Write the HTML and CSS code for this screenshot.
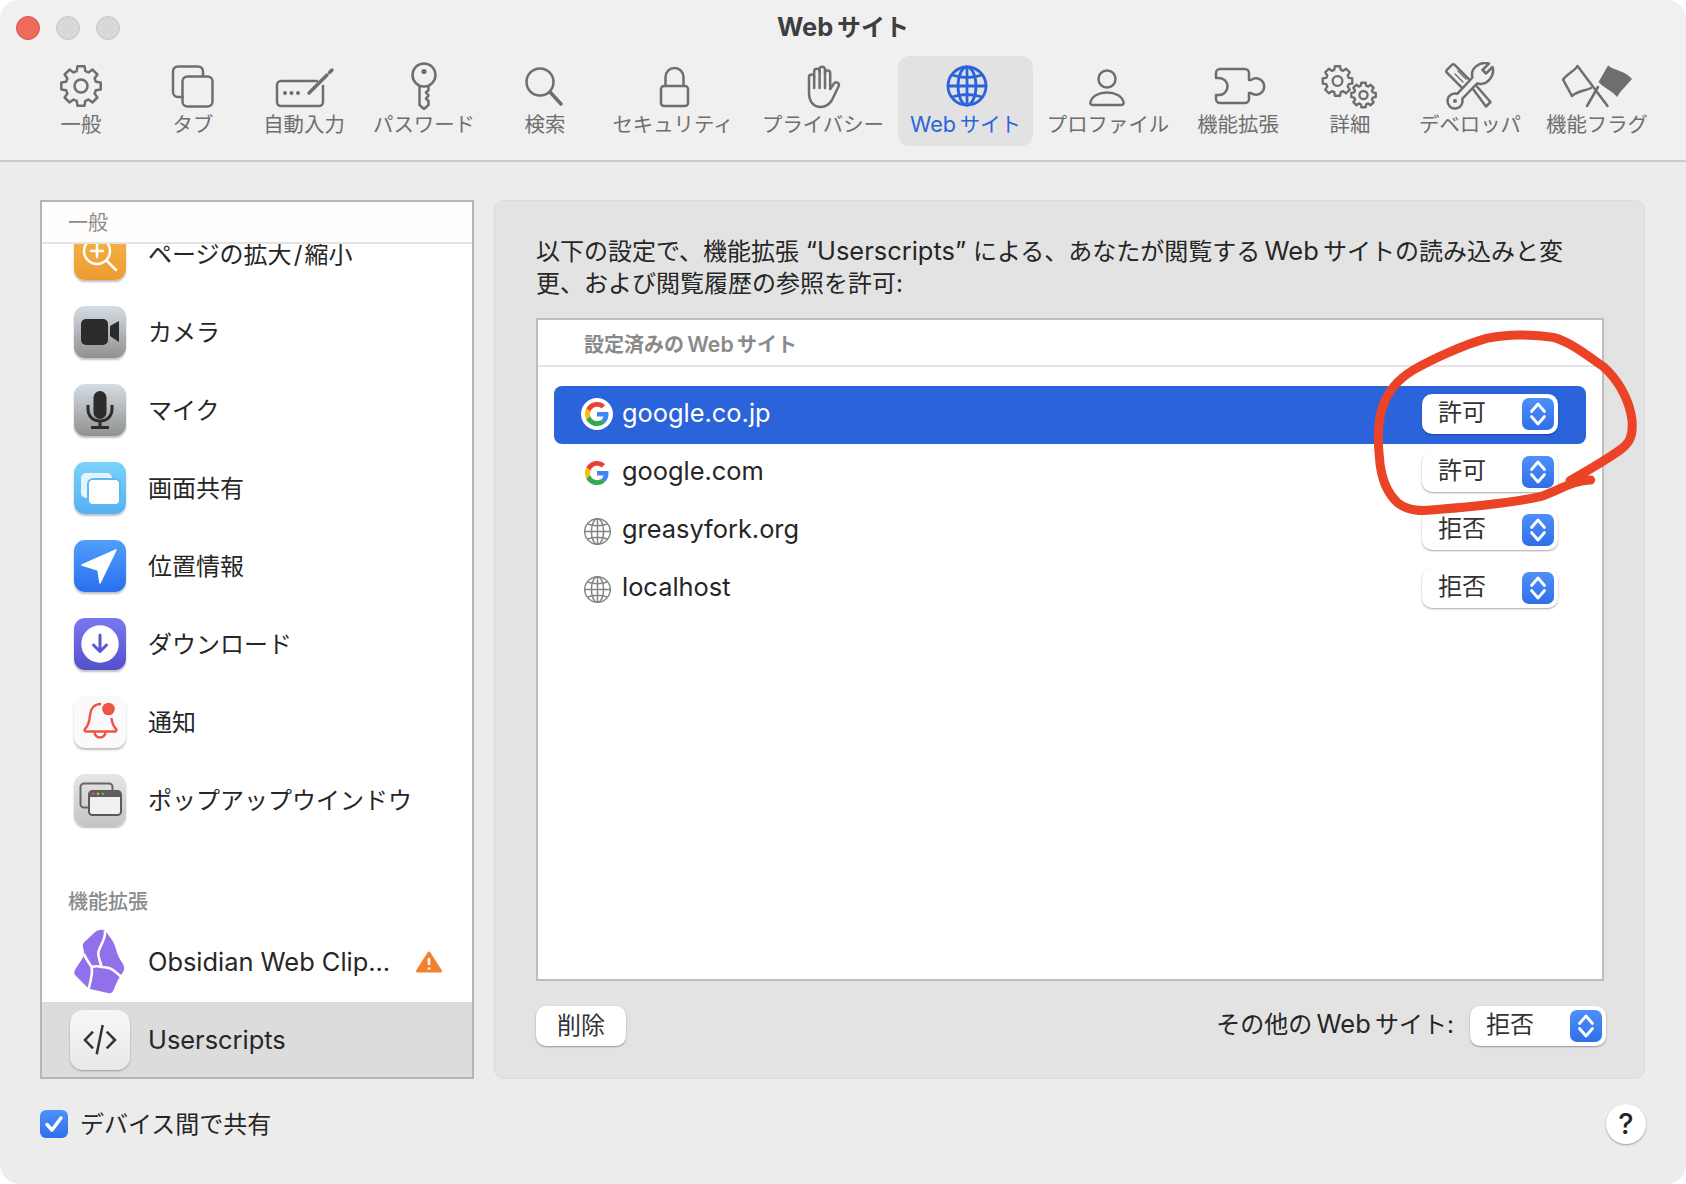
FILE: index.html
```html
<!DOCTYPE html>
<html lang="ja">
  <head>
    <meta charset="UTF-8" />
    <meta name="viewport" content="width=device-width, initial-scale=1.0" />
    <title>Webサイト</title>
    <link rel="stylesheet" href="styles.css">
  </head>

  <body>
    <svg class="defs">
      <defs>
        <g id="gear">
          <path d="M14.9 -4.3L19.7 -3.5L19.7 3.5L14.9 4.3L13.6 7.5L16.4 11.5L11.5 16.4L7.5 13.6L4.3 14.9L3.5 19.7L-3.5 19.7L-4.3 14.9L-7.5 13.6L-11.5 16.4L-16.4 11.5L-13.6 7.5L-14.9 4.3L-19.7 3.5L-19.7 -3.5L-14.9 -4.3L-13.6 -7.5L-16.4 -11.5L-11.5 -16.4L-7.5 -13.6L-4.3 -14.9L-3.5 -19.7L3.5 -19.7L4.3 -14.9L7.5 -13.6L11.5 -16.4L16.4 -11.5L13.6 -7.5Z" />
          <circle r="6.5" />
        </g>
        <g id="globe">
          <circle r="19" />
          <ellipse rx="9" ry="19" />
          <path d="M0 -19V19M-19 0H19M-15 -11Q0 -6 15 -11M-15 11Q0 6 15 11" />
        </g>
        <g id="google">
          <path fill="#EA4335" d="M24 9.5c3.54 0 6.71 1.22 9.21 3.6l6.85-6.85C35.9 2.38 30.47 0 24 0 14.62 0 6.51 5.38 2.56 13.22l7.98 6.19C12.43 13.72 17.74 9.5 24 9.5z" />
          <path fill="#4285F4" d="M46.98 24.55c0-1.57-.15-3.09-.38-4.55H24v9.02h12.94c-.58 2.96-2.26 5.48-4.78 7.18l7.73 6c4.51-4.18 7.09-10.36 7.09-17.65z" />
          <path fill="#FBBC05" d="M10.53 28.59c-.48-1.45-.76-2.99-.76-4.59s.27-3.14.76-4.59l-7.98-6.19C.92 16.46 0 20.12 0 24c0 3.88.92 7.54 2.56 10.78l7.97-6.19z" />
          <path fill="#34A853" d="M24 48c6.48 0 11.93-2.13 15.89-5.81l-7.73-6c-2.15 1.45-4.92 2.3-8.16 2.3-6.26 0-11.57-4.22-13.47-9.91l-7.98 6.19C6.51 42.62 14.62 48 24 48z" />
        </g>
        <g id="updown">
          <path d="M9.500 13.500L16 6L22.500 13.500M9.500 18.500L16 26L22.500 18.500" />
        </g>
      </defs>
    </svg>

    <div class="window">
      <div class="titlebar">
        <div class="lights">
          <span class="light red"></span>
          <span class="light"></span>
          <span class="light"></span>
        </div>
        <div class="title"><span class="lat">Web</span>&#8201;サイト</div>
      </div>

      <div class="toolbar">
        <div class="tool w-general">
          <svg class="tool-icon" viewBox="-35 0 70 48"><use href="#gear" transform="translate(0 24)" /></svg>
          <span>一般</span>
        </div>
        <div class="tool w-tabs">
          <svg class="tool-icon" viewBox="-35 0 70 48">
            <rect x="-10.5" y="14.5" width="30" height="30" rx="5" />
            <path d="M-10.5 35H-15a5 5 0 0 1-5-5V9.5a5 5 0 0 1 5-5H5a5 5 0 0 1 5 5V14" />
          </svg>
          <span>タブ</span>
        </div>
        <div class="tool w-autofill">
          <svg class="tool-icon" viewBox="-35 0 70 48">
            <path d="M13 19H-23a4 4 0 0 0-4 4V40a4 4 0 0 0 4 4H15a4 4 0 0 0 4-4V24" />
            <circle class="solid" cx="-19" cy="31" r="2" />
            <circle class="solid" cx="-12.5" cy="31" r="2" />
            <circle class="solid" cx="-6" cy="31" r="2" />
            <path class="pen" d="M5 31L23 13M25.5 10.5L28 8" />
          </svg>
          <span>自動入力</span>
        </div>
        <div class="tool w-password">
          <svg class="tool-icon" viewBox="-35 0 70 48">
            <circle cy="13" r="11.5" />
            <circle class="solid" cy="9.5" r="2.6" />
            <path d="M-4.5 24V43L0 47L4.5 43V39L2 36.5L4.5 33.5L2 30.5L4.5 28V24" />
          </svg>
          <span>パスワード</span>
        </div>
        <div class="tool w-search">
          <svg class="tool-icon" viewBox="-35 0 70 48">
            <circle cx="-5" cy="20" r="13.5" />
            <path class="pen" d="M5 30L16 42" />
          </svg>
          <span>検索</span>
        </div>
        <div class="tool w-wide">
          <svg class="tool-icon" viewBox="-35 0 70 48">
            <rect x="-12" y="24" width="27" height="20" rx="3" />
            <path d="M-7.500 24V15a9 9 0 0 1 18 0V24" />
          </svg>
          <span>セキュリティ</span>
        </div>
        <div class="tool w-wide">
          <svg class="tool-icon" viewBox="-35 0 70 48">
            <path d="M-14 30V15a2.6 2.6 0 0 1 5.2 0V9.5a2.7 2.7 0 0 1 5.4 0V7.5a2.7 2.7 0 0 1 5.4 0V11a2.6 2.6 0 0 1 5.2 0V27L11 21.5a2.7 2.7 0 0 1 4.6 2.8L9 38C6.5 42 3 45 -2 45C-9 45 -14 40 -14 31Z" />
            <path d="M-8.8 15V26M-3.4 9V26M2 9V26" />
          </svg>
          <span>プライバシー</span>
        </div>
        <div class="tool w-websites active">
          <svg class="tool-icon" viewBox="-35 0 70 48"><use href="#globe" transform="translate(1 24)" /></svg>
          <span><span class="lat">Web</span>&#8201;サイト</span>
        </div>
        <div class="tool w-wide">
          <svg class="tool-icon" viewBox="-35 0 70 48">
            <circle cx="-1" cy="17" r="8.5" />
            <path d="M-15 43C-17 43 -18 42 -17.5 40C-16 34 -9 30.5 -1 30.5C7 30.5 14 34 15.5 40C16 42 15 43 13 43Z" />
          </svg>
          <span>プロファイル</span>
        </div>
        <div class="tool w-extensions">
          <svg class="tool-icon" viewBox="-35 0 70 48">
            <path d="M-18 7H7a4 4 0 0 1 4 4V18h2A8.200 8.200 0 1 1 13 31h-2V37a4 4 0 0 1-4 4H-18a4 4 0 0 1-4-4V33h3a8.500 8.500 0 0 0 0-17h-3V11a4 4 0 0 1 4-4Z" />
          </svg>
          <span>機能拡張</span>
        </div>
        <div class="tool w-advanced">
          <svg class="tool-icon" viewBox="-35 0 70 48">
            <use href="#gear" transform="translate(-12.5 19) scale(.75)" stroke-width="3.1" />
            <use href="#gear" transform="translate(13.5 33) scale(.62)" stroke-width="3.8" />
          </svg>
          <span>詳細</span>
        </div>
        <div class="tool w-developer">
          <svg class="tool-icon" viewBox="-35 0 70 48">
            <rect x="-15" y="-5.5" width="30" height="11" rx="2" transform="translate(-10 16) rotate(45)" />
            <path d="M-15 12L-7 20M-12 9L-4 17" stroke-width="1.4" />
            <path d="M3 27L16 44.5L20.5 40L6.5 24" />
            <path d="M19 1.5L12.5 8L16 11.5L22.5 5C25 13 18 24 7 21.5L-7.8 36.8A7.5 7.5 0 1 1 -12.8 31.8L2.5 15.5C0 7 9 -1 19 1.5Z" class="knock" />
            <circle class="solid" cx="-15" cy="39" r="2" />
          </svg>
          <span>デベロッパ</span>
        </div>
        <div class="tool w-flags">
          <svg class="tool-icon" viewBox="-35 0 70 48">
            <path d="M-19.5 4.5C-24 10 -30 12 -34 17.5L-25 34C-20 29 -12 29 -6 26" />
            <path d="M-19.5 4L10.5 44M1 25L-10 44" />
            <path class="solid" d="M11 3.5C18 9 27 8 35 17C30 23 24 28 20 35C14 28 7 26 1.5 20Z" />
          </svg>
          <span>機能フラグ</span>
        </div>
      </div>

      <div class="content">
        <div class="sidebar">
          <div class="side-head">一般</div>
          <div class="side-list">
            <div class="side-row first">
              <span class="app-icon i-zoom">
                <svg viewBox="0 0 52 52" class="line-white"><circle cx="23" cy="23" r="13" /><path d="M17 23H29M23 17V29M32.5 32.5L42 42" /></svg>
              </span>
              <span class="side-text">ページの拡大&#8202;/&#8202;縮小</span>
            </div>
            <div class="side-row">
              <span class="app-icon i-gray">
                <svg viewBox="0 0 52 52"><rect x="7" y="13" width="27" height="26" rx="5" fill="#2b2b2b" /><path d="M36 20L45 15V36L36 30Z" fill="#2b2b2b" /></svg>
              </span>
              <span class="side-text">カメラ</span>
            </div>
            <div class="side-row">
              <span class="app-icon i-gray">
                <svg viewBox="0 0 52 52"><rect x="19.5" y="7" width="13" height="28" rx="6.5" fill="#2b2b2b" /><path d="M14 21V25C14 32 19 37 26 37C33 37 38 32 38 25V21M26 37V43M17 43.5H35" fill="none" stroke="#2b2b2b" stroke-width="3" /></svg>
              </span>
              <span class="side-text">マイク</span>
            </div>
            <div class="side-row">
              <span class="app-icon i-screen">
                <svg viewBox="0 0 52 52"><rect x="7" y="11" width="31" height="25" rx="5" fill="#e4f4fd" /><rect x="14" y="17" width="32" height="26" rx="5" fill="#fff" stroke="#5db8f4" stroke-width="2" /></svg>
              </span>
              <span class="side-text">画面共有</span>
            </div>
            <div class="side-row">
              <span class="app-icon i-location">
                <svg viewBox="0 0 52 52"><path d="M42 10L8 25L24 30L26 43Z" fill="#fff" stroke="#fff" stroke-width="1.5" stroke-linejoin="round" /></svg>
              </span>
              <span class="side-text">位置情報</span>
            </div>
            <div class="side-row">
              <span class="app-icon i-download">
                <svg viewBox="0 0 52 52"><circle cx="26" cy="26" r="18.7" fill="#fff" /><path d="M26 17V33M19.5 27L26 33.5L32.5 27" fill="none" stroke="#5a55d8" stroke-width="3" stroke-linecap="round" stroke-linejoin="round" /></svg>
              </span>
              <span class="side-text">ダウンロード</span>
            </div>
            <div class="side-row">
              <span class="app-icon i-notify">
                <svg viewBox="0 0 52 52"><path d="M27 8C20 8 16.5 13 16 19C15.5 26 14 30 11 33C10 34.5 11 35.5 12 35.5H41C42 35.5 43 34 42 33C39.5 30.5 38 27 37.5 22M20.5 36a5.5 5.5 0 0 0 11 0" fill="none" stroke="#ee5545" stroke-width="2.5" /><circle cx="34.5" cy="13" r="6.3" fill="#ee5545" /></svg>
              </span>
              <span class="side-text">通知</span>
            </div>
            <div class="side-row">
              <span class="app-icon i-popup">
                <svg viewBox="0 0 52 52"><rect x="6.5" y="9.5" width="32" height="24" rx="3.5" fill="none" stroke="#666" stroke-width="2" /><rect x="15" y="17" width="32" height="24" rx="3.5" fill="#f1f1f1" stroke="#5a5a5a" stroke-width="2" /><path d="M15 23V20.5a3.5 3.5 0 0 1 3.5-3.5H43.500a3.500 3.500 0 0 1 3.500 3.500V23Z" fill="#5f5f5f" /><circle cx="19" cy="19.800" r="1.300" fill="#ee5545" /><circle cx="24" cy="19.800" r="1.300" fill="#f0b03c" /><circle cx="29" cy="19.800" r="1.300" fill="#4fc25a" /></svg>
              </span>
              <span class="side-text">ポップアップウインドウ</span>
            </div>
            <div class="side-section">機能拡張</div>
            <div class="side-row ext">
              <svg class="obsidian" viewBox="0 0 52 66">
                <path d="M26 1C24 1 22 2 20 4C16 8 11 12 9 15C8 19 11 22 10 26C8 31 3 37 1 41C0 43 0 45 1 46L12 57C13 58 14 59 16 60C22 61 28 63 34 64C37 65 39 63 40 60C42 54 45 49 49 43C51 40 50 37 49 35C46 30 43 26 42 20C41 17 40 14 38 11L33 4C31 1 28 0 26 1Z" fill="#9171eb" />
                <path d="M31 2C32 12 24 18 24.300 25C24.500 30 27 34 27.500 38M10 25C12 30 15 34 17.700 38C21 37 24 37 27.500 38C32 38 36 39 39 41C43 44 46 47 50 50M17.700 38C19 46 16 54 14 62" fill="none" stroke="#fff" stroke-width="2.600" />
              </svg>
              <span class="side-text ext-name">Obsidian Web Clip...</span>
              <svg class="warn" viewBox="0 0 26 22">
                <path d="M13 2L24.500 20H1.500Z" fill="#f0822e" stroke="#f0822e" stroke-width="3" stroke-linejoin="round" />
                <path d="M13 7V14M13 16.500V18.500" stroke="#fff" stroke-width="2.500" />
              </svg>
            </div>
            <div class="side-row ext selected">
              <span class="script-icon">
                <svg viewBox="0 0 60 60"><path d="M23 21.700L15 30L23 38.300M36.700 21.700L45 30L36.700 38.300M32.700 15L26.700 44.300" fill="none" stroke="#333" stroke-width="2.500" /></svg>
              </span>
              <span class="side-text latin-row">Userscripts</span>
            </div>
          </div>
        </div>

        <div class="panel">
          <p class="desc">以下の設定で、機能拡張 <span class="lat">“Userscripts”</span> による、あなたが閲覧する&#8201;<span class="lat">Web</span>&#8201;サイトの読み込みと変<br>更、および閲覧履歴の参照を許可:</p>

          <div class="sites">
            <div class="sites-head">設定済みの&#8201;<span class="lat">Web</span>&#8201;サイト</div>
            <div class="sites-list">
              <div class="site selected">
                <span class="fav fav-round"><svg viewBox="0 0 48 48"><use href="#google" /></svg></span>
                <span class="site-name">google.co.jp</span>
                <div class="popup"><span class="popup-label">許可</span><svg class="stepper" viewBox="0 0 32 32"><use href="#updown" /></svg></div>
              </div>
              <div class="site">
                <span class="fav"><svg class="fav-g" viewBox="0 0 48 48"><use href="#google" /></svg></span>
                <span class="site-name">google.com</span>
                <div class="popup"><span class="popup-label">許可</span><svg class="stepper" viewBox="0 0 32 32"><use href="#updown" /></svg></div>
              </div>
              <div class="site">
                <span class="fav"><svg class="fav-globe" viewBox="-20 -20 40 40"><use href="#globe" /></svg></span>
                <span class="site-name">greasyfork.org</span>
                <div class="popup"><span class="popup-label">拒否</span><svg class="stepper" viewBox="0 0 32 32"><use href="#updown" /></svg></div>
              </div>
              <div class="site">
                <span class="fav"><svg class="fav-globe" viewBox="-20 -20 40 40"><use href="#globe" /></svg></span>
                <span class="site-name">localhost</span>
                <div class="popup"><span class="popup-label">拒否</span><svg class="stepper" viewBox="0 0 32 32"><use href="#updown" /></svg></div>
              </div>
            </div>
          </div>

          <div class="panel-foot">
            <button class="btn">削除</button>
            <div class="other">
              <span class="other-label">その他の&#8201;<span class="lat">Web</span>&#8201;サイト:</span>
              <div class="popup"><span class="popup-label">拒否</span><svg class="stepper" viewBox="0 0 32 32"><use href="#updown" /></svg></div>
            </div>
          </div>
        </div>
      </div>

      <div class="footer">
        <label class="share">
          <span class="check">
            <svg viewBox="0 0 28 28"><path d="M7 14.500L12 20L21 8" fill="none" stroke="#fff" stroke-width="3.500" stroke-linecap="round" stroke-linejoin="round" /></svg>
          </span>
          <span class="side-text">デバイス間で共有</span>
        </label>
        <div class="help">?</div>
      </div>

      <!-- hand drawn circle from the screenshot -->
      <svg class="scribble" viewBox="0 0 1038 930">
        <path d="M752 510C700 510 660 540 600 560C520 578 400 590 300 598C240 605 205 602 175 580C140 550 122 500 118 440C113 390 115 330 128 290C143 245 170 210 220 180C280 145 370 105 440 85C500 72 580 72 640 82C690 95 740 135 790 170C830 205 868 265 876 330C880 380 868 400 840 420C800 448 750 478 690 512" />
      </svg>
    </div>
  </body>
</html>
```

FILE: styles.css
```css
* {
  box-sizing: border-box;
}

body {
  margin: 0;
  background-color: #fff;
  font-family: Inter, "Noto Sans CJK JP", sans-serif;
  color: #262626;
  overflow: hidden;
}

.defs {
  display: none;
}

/* latin runs are a bit wider than Inter at the same size */
.lat {
  font-size: 1.06em;
  line-height: 1;
}

.window {
  position: relative;
  width: 1686px;
  height: 1184px;
  background-color: #ececec;
  border-radius: 20px;
  overflow: hidden;
}

/* title bar */

.titlebar {
  position: relative;
  height: 56px;
  background-color: #eff0ef;
  display: flex;
  align-items: center;
  justify-content: center;
}

.lights {
  position: absolute;
  left: 16px;
  top: 16px;
  display: flex;
  gap: 16px;
}

.light {
  width: 24px;
  height: 24px;
  border-radius: 50%;
  background-color: #d8d8d8;
  border: 1px solid #c8c8c8;
}

.light.red {
  background-color: #ee6a5f;
  border-color: #d9534a;
}

.title {
  font-size: 24px;
  font-weight: 700;
  color: #3e3e3e;
  margin-top: -6px;
}

/* toolbar */

.toolbar {
  height: 106px;
  padding-left: 28px;
  display: flex;
  align-items: flex-start;
  background-color: #eff0ef;
  border-bottom: 2px solid #cbcbcb;
}

.tool {
  height: 90px;
  padding-top: 6px;
  display: flex;
  flex-direction: column;
  align-items: center;
  font-size: 20.4px;
  line-height: 24px;
  color: #6e6e6e;
  border-radius: 12px;
  white-space: nowrap;
}

.w-general { width: 106px; }
.w-tabs { width: 118px; }
.w-autofill { width: 104px; }
.w-password { width: 136px; }
.w-search { width: 106px; }
.w-wide { width: 150px; }
.w-websites { width: 135px; }
.w-extensions { width: 110px; }
.w-advanced { width: 114px; }
.w-developer { width: 126px; }
.w-flags { width: 128px; }

.tool-icon {
  width: 70px;
  height: 48px;
  flex: none;
  margin-bottom: 3px;
  fill: none;
  stroke: #6e6e6e;
  stroke-width: 2.5;
  stroke-linejoin: round;
  stroke-linecap: round;
}

.tool-icon .solid {
  fill: #6e6e6e;
  stroke: none;
}

.tool-icon .pen {
  stroke-width: 3.5;
}

.tool-icon .knock {
  fill: #eff0ef;
}

.tool.active {
  background-color: #e2e2e2;
  color: #2b63db;
}

.tool.active .tool-icon {
  stroke: #2b63db;
  stroke-width: 2.8;
}

/* main area */

.content {
  height: 917px;
  padding: 38px 41px 0 40px;
  display: flex;
  gap: 20px;
}

.sidebar {
  width: 434px;
  flex: none;
  display: flex;
  flex-direction: column;
  background-color: #fff;
  border: 2px solid #b5b5b5;
  overflow: hidden;
}

.side-head {
  height: 42px;
  flex: none;
  padding: 9px 0 0 26px;
  font-size: 20px;
  line-height: 24px;
  color: #8a8a8a;
  background-color: #fffefc;
  border-bottom: 2px solid #e3e3e3;
  position: relative;
  z-index: 1;
}

.side-list {
  flex: 1;
  overflow: hidden;
}

.side-row {
  height: 78px;
  padding-left: 32px;
  display: flex;
  align-items: center;
  gap: 22px;
  font-size: 24px;
  white-space: nowrap;
}

.side-text {
  margin-bottom: 4px;
}

.side-row.first {
  margin-top: -29px;
}

.side-section {
  height: 85px;
  padding: 51px 0 0 26px;
  font-size: 20px;
  line-height: 24px;
  font-weight: 500;
  color: #8a8a8a;
}

.app-icon {
  width: 52px;
  height: 52px;
  flex: none;
  border-radius: 11px;
  box-shadow: 0 2px 2px rgba(0, 0, 0, 0.25);
}

.app-icon svg {
  display: block;
  width: 52px;
  height: 52px;
}

.line-white {
  fill: none;
  stroke: #fff;
  stroke-width: 2.5;
  stroke-linecap: round;
}

.i-zoom { background: linear-gradient(#f6b648, #ef9a33); }
.i-gray { background: linear-gradient(#d4dde4, #909090); }
.i-screen { background: linear-gradient(#7ad3f8, #55b0f2); }
.i-location { background: linear-gradient(#4f9ffb, #2a6ff0); }
.i-download { background: linear-gradient(#7a78f0, #5450cc); }
.i-notify { background-color: #fafafa; }
.i-popup { background: linear-gradient(#e6e6e6, #c4c4c4); }

.obsidian {
  width: 52px;
  height: 66px;
  flex: none;
  margin-bottom: 2px;
}

.ext-name {
  width: 246px;
  flex: none;
  font-size: 25.4px;
}

.latin-row {
  font-size: 25.4px;
}

.warn {
  width: 26px;
  height: 22px;
  flex: none;
  margin-bottom: 2px;
}

.side-row.selected {
  padding-left: 28px;
  gap: 18px;
  background-color: #dcdcdc;
}

.script-icon {
  width: 60px;
  height: 60px;
  flex: none;
  margin-bottom: 3px;
  border-radius: 13px;
  background: linear-gradient(#f7f7f7, #e8e8e8);
  box-shadow: 0 1px 2px rgba(0, 0, 0, 0.3);
}

.script-icon svg {
  display: block;
  width: 60px;
  height: 60px;
}

/* right panel */

.panel {
  flex: 1;
  height: 879px;
  padding: 35px 40px 0 41px;
  display: flex;
  flex-direction: column;
  background-color: #e3e3e3;
  border: 1px solid #dcdcdc;
  border-radius: 10px;
}

.desc {
  height: 64px;
  margin: 0 0 18px;
  font-size: 24px;
  line-height: 32px;
  white-space: nowrap;
}

.sites {
  height: 663px;
  flex: none;
  background-color: #fff;
  border: 2px solid #bdbdbd;
}

.sites-head {
  height: 47px;
  padding: 10px 0 0 46px;
  font-size: 20px;
  line-height: 30px;
  font-weight: 600;
  color: #8a8a8a;
  border-bottom: 2px solid #e3e3e3;
}

.sites-list {
  padding: 19px 16px 0;
}

.site {
  height: 58px;
  padding: 0 28px 0 27px;
  display: flex;
  align-items: center;
  font-size: 25.4px;
  border-radius: 8px;
}

.site .popup {
  margin-bottom: 2px;
}

.site.selected {
  background-color: #2b63db;
  color: #fff;
}

.fav {
  width: 32px;
  height: 32px;
  flex: none;
  display: flex;
  align-items: center;
  justify-content: center;
}

.fav-round {
  background-color: #fff;
  border-radius: 50%;
  margin-bottom: 2px;
}

.fav-round svg {
  width: 24px;
  height: 24px;
}

.fav-g {
  width: 24px;
  height: 24px;
}

.fav-globe {
  width: 27px;
  height: 27px;
  fill: none;
  stroke: #858585;
  stroke-width: 2.2;
}

.site-name {
  margin-left: 9px;
  margin-bottom: 5px;
  flex: 1;
}

.popup {
  width: 136px;
  height: 40px;
  padding: 4px 4px 4px 16px;
  display: flex;
  align-items: center;
  justify-content: space-between;
  font-size: 24px;
  color: #333;
  background-color: #fff;
  border-radius: 10px;
  box-shadow: 0 1px 2px rgba(0, 0, 0, 0.35);
}

.popup-label {
  margin-bottom: 2px;
  line-height: 30px;
}

.stepper {
  width: 32px;
  height: 32px;
  flex: none;
  border-radius: 7px;
  background: linear-gradient(#4e90fb, #2f6fe8);
  fill: none;
  stroke: #fff;
  stroke-width: 2.8;
  stroke-linecap: round;
  stroke-linejoin: round;
}

.panel-foot {
  margin-top: 25px;
  margin-right: -2px;
  display: flex;
  align-items: flex-start;
  justify-content: space-between;
}

.btn {
  width: 90px;
  height: 40px;
  padding: 0 0 6px;
  border: none;
  border-radius: 10px;
  background-color: #fff;
  font-family: inherit;
  font-size: 24px;
  color: #333;
  box-shadow: 0 1px 2px rgba(0, 0, 0, 0.35);
}

.other {
  height: 40px;
  display: flex;
  align-items: center;
  gap: 16px;
  font-size: 24px;
}

.other-label {
  margin-bottom: 3px;
  line-height: 30px;
}

/* bottom strip */

.footer {
  padding: 25px 40px 0;
  display: flex;
  align-items: center;
  justify-content: space-between;
}

.share {
  display: flex;
  align-items: center;
  gap: 12px;
  font-size: 24px;
}

.check {
  width: 28px;
  height: 28px;
  border-radius: 6px;
  background: linear-gradient(#4e90fb, #2f6fe8);
}

.check svg {
  display: block;
  width: 28px;
  height: 28px;
}

.help {
  width: 40px;
  height: 40px;
  border-radius: 50%;
  background-color: #fff;
  font-size: 29px;
  line-height: 40px;
  font-weight: 500;
  text-align: center;
  box-shadow: 0 1px 2px rgba(0, 0, 0, 0.35);
}

/* red pen mark over the list */

.scribble {
  position: absolute;
  left: 1340px;
  top: 310px;
  width: 346px;
  height: 310px;
  fill: none;
  stroke: #ea4326;
  stroke-width: 27;
  stroke-linecap: round;
  stroke-linejoin: round;
}
```
